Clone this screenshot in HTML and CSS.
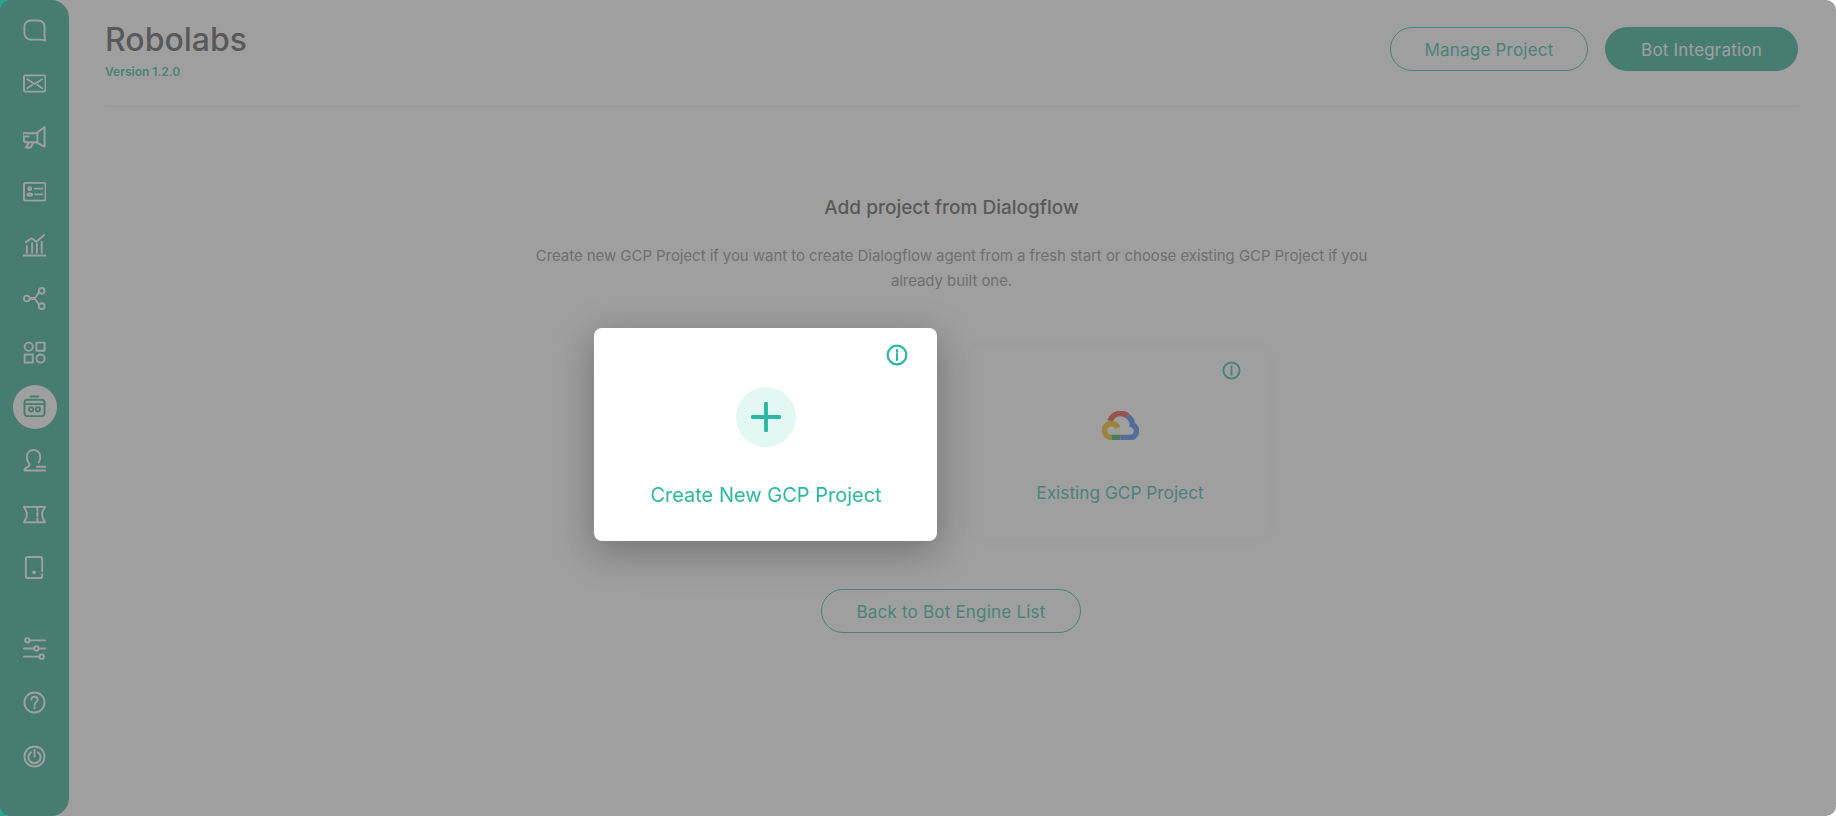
FILE: index.html
```html
<!DOCTYPE html>
<html lang="en">
<head>
<meta charset="utf-8">
<title>Robolabs</title>
<link rel="stylesheet" href="styles.css">
</head>
<body>

<div class="app">

  <aside class="sidebar">
    <nav class="nav-top">
      <a class="nav-item"><svg class="ico" viewBox="0 0 24 24"><path d="M8 1.500h8a6.500 6.500 0 0 1 6.500 6.500v8.500c0 2 .2 4 .9 6-2-.8-4.400-1-6.400-1H8A6.500 6.500 0 0 1 1.500 15V8A6.500 6.500 0 0 1 8 1.500z"/></svg></a>
      <a class="nav-item"><svg class="ico" viewBox="0 0 24 24"><rect x="1" y="3.500" width="22.500" height="17" rx="2"/><path d="M4.500 7.500l7.700 5 7.700-5M4.500 17l5-3.500M20 17l-5-3.500"/></svg></a>
      <a class="nav-item"><svg class="ico" viewBox="0 0 24 24"><path d="M22.500 1v20.500L14 17H3.500A2.500 2.500 0 0 1 1 14.500v-2A2.500 2.500 0 0 1 3.500 7.500H14zM15 7v10M6 11h-5M6.500 17L3 22.500h5L11 17"/></svg></a>
      <a class="nav-item"><svg class="ico" viewBox="0 0 24 24"><rect x="1" y="3" width="22.500" height="18.500" rx="2"/><path d="M12.500 9h7.500M12.500 15h7.500"/><circle cx="7" cy="9" r="1.500"/><path d="M4.500 15.500c0-1 1-1.500 2.500-1.500s2.500.5 2.500 1.500c0 .5-1 1-2.500 1s-2.500-.5-2.500-1z"/></svg></a>
      <a class="nav-item"><svg class="ico" viewBox="0 0 24 24"><path d="M.5 22.500h23M4 19.500v-7M9.500 19.500V9.500M14.500 19.500v-9M19.500 19.500V8M3 8.500l6-4 5 3.500 8-7"/></svg></a>
      <a class="nav-item"><svg class="ico" viewBox="0 0 24 24"><circle cx="4" cy="12" r="3"/><circle cx="19.500" cy="4" r="3"/><circle cx="19.500" cy="20" r="3"/><path d="M7 11.500L12.500 11.500 16.800 5.500M7 12.500l5.500 0 4.300 6"/></svg></a>
      <a class="nav-item"><svg class="ico" viewBox="0 0 24 24"><circle cx="6" cy="6" r="4.300"/><rect x="14" y="1.700" width="8.500" height="8.500"/><rect x="1.700" y="14" width="8.500" height="8.500"/><circle cx="18.300" cy="18.300" r="4.300"/></svg></a>
      <a class="nav-item active"><svg class="ico" viewBox="0 0 24 24"><path d="M8 1.500h8"/><rect x="1.500" y="5" width="21" height="17" rx="3"/><path d="M1.500 9.500h21"/><circle cx="8.500" cy="15" r="2.200"/><circle cx="15.500" cy="15" r="2.200"/></svg></a>
      <a class="nav-item"><svg class="ico" viewBox="0 0 24 24"><path d="M15 22.500H1.500c0-2 1.500-3 3-3.500 2-.7 2.500-2 2-3.500C5 13 4 11 4 8.500 4 4 7 1 11 1s7 3 7 7.500c0 2-.7 4-1.700 5.500"/><path d="M14.500 18.500h9M14.500 22.500h9"/></svg></a>
      <a class="nav-item"><svg class="ico" viewBox="0 0 24 24"><path d="M1 4h22l-2 3.500c-1 1.500-1 3-1 4.500s0 3 1 4.500L23 20H1l2-3.500c1-1.500 1-3 1-4.500s0-3-1-4.500zM15 4v4M15 10.500v3M15 16v4"/></svg></a>
      <a class="nav-item"><svg class="ico" viewBox="0 0 24 24"><path d="M20 19v2a2 2 0 0 1-2 2H5a2 2 0 0 1-2-2V3a2 2 0 0 1 2-2h13a2 2 0 0 1 2 2v13"/><circle cx="11.500" cy="17" r="1" class="dot"/></svg></a>
    </nav>
    <nav class="nav-bottom">
      <a class="nav-item"><svg class="ico" viewBox="0 0 24 24"><circle cx="4.500" cy="3.500" r="2.300"/><path d="M7 3.500h16M1 12h10M17 12h6M1 20.500h16"/><circle cx="14" cy="12" r="2.300"/><circle cx="19.500" cy="20.500" r="2.300"/></svg></a>
      <a class="nav-item"><svg class="ico" viewBox="0 0 24 24"><circle cx="12" cy="12" r="10.500"/><path d="M8.700 9.200c0-2 1.500-3.200 3.300-3.200s3.300 1.200 3.300 3c0 2.700-3.300 2.700-3.300 5.500"/><path d="M12 17v1"/></svg></a>
      <a class="nav-item"><svg class="ico" viewBox="0 0 24 24"><circle cx="12" cy="12" r="10.500"/><path d="M8.500 7.500a6.300 6.300 0 1 0 7 0M12 5v7"/></svg></a>
    </nav>
  </aside>

  <main class="content">
    <header class="top">
      <div>
        <h1 class="title">Robolabs</h1>
        <div class="version">Version 1.2.0</div>
      </div>
      <div class="top-btns">
        <a class="btn btn-line btn-manage">Manage Project</a>
        <a class="btn btn-fill">Bot Integration</a>
      </div>
    </header>

    <section class="add">
      <h2 class="add-title">Add project from Dialogflow</h2>
      <p class="add-text">Create new GCP Project if you want to create Dialogflow agent from a fresh start or choose existing GCP Project if you already built one.</p>

      <div class="cards">
        <div class="card card-existing">
          <svg class="info" viewBox="0 0 20 20"><circle cx="10" cy="10" r="8.500"/><path d="M10 9v5.500M10 5.500v1.500"/></svg>
          <svg class="gcp" viewBox="0 0 37 29">
            <path class="g-red" d="M8 10A11 11 0 0 1 25.500 5"/>
            <path class="g-yellow" d="M9.500 26.500A7 7 0 1 1 16 17"/>
            <path class="g-green" d="M9.500 26.500H18.500"/>
            <path class="g-blue" d="M18.500 26.500H28a6.500 6.500 0 0 0 2.300-12.600A11 11 0 0 0 25.500 5"/>
          </svg>
          <div class="card-label">Existing GCP Project</div>
        </div>
      </div>

      <a class="btn btn-line btn-back">Back to Bot Engine List</a>
    </section>
  </main>

</div>

<div class="overlay">
  <div class="card card-new">
    <svg class="info" viewBox="0 0 20 20"><circle cx="10" cy="10" r="8.500"/><path d="M10 9v5.500M10 5.500v1.500"/></svg>
    <div class="plus">
      <svg viewBox="0 0 28 28"><path d="M14 1.500v25M1.500 14h25"/></svg>
    </div>
    <div class="card-label">Create New GCP Project</div>
  </div>
</div>

</body>
</html>
```

FILE: styles.css
```css
* { box-sizing: border-box; }
html, body { margin: 0; height: 100%; overflow: hidden; }
body { font-family: Inter, "Liberation Sans", sans-serif; background: #fff; color: #505050; }

.app { display: flex; height: 816px; background: #fff; }

/* sidebar */
.sidebar { width: 69px; flex: none; display: flex; flex-direction: column; justify-content: space-between; padding: 8px 0 0; background: #25a98f; border-radius: 0 18px 18px 0; }
.nav-top, .nav-bottom { display: flex; flex-direction: column; align-items: center; }
.nav-bottom { padding-bottom: 38px; gap: 10px; }
.nav-item { width: 44px; height: 44px; margin-bottom: 9.800px; display: flex; align-items: center; justify-content: center; border-radius: 50%; color: #fff; }
.nav-bottom .nav-item { margin-bottom: 0; }
.nav-item.active { background: #fff; color: #25a98f; }
.ico { width: 23px; height: 23px; fill: none; stroke: currentColor; stroke-width: 2; stroke-linecap: round; stroke-linejoin: round; }
.ico .dot { fill: currentColor; }

/* main */
.content { flex: 1; padding: 0 38px 0 36px; }
.top { display: flex; justify-content: space-between; height: 107px; border-bottom: 1px solid #f0f0f0; padding-top: 22px; }
.title { margin: 0; font-size: 32px; font-weight: 500; line-height: 36px; color: #505050; }
.version { margin-top: 6px; font-size: 12px; font-weight: 600; line-height: 15px; color: #2bb8a0; }
.top-btns { display: flex; gap: 17px; padding-top: 5px; }

.btn { height: 44px; padding-top: 1px; display: inline-flex; align-items: center; justify-content: center; border-radius: 22px; font-size: 17px; letter-spacing: .2px; color: #2bb8a0; }
.btn-line { border: 1px solid #2bb8a0; background: #fff; }
.btn-fill { width: 193px; background: #25a98f; color: #fff; }
.btn-manage { width: 198px; }
.btn-back { width: 260px; margin-right: 1px; }

.add { display: flex; flex-direction: column; align-items: center; padding-top: 90px; }
.add-title { margin: 0; font-size: 19px; font-weight: 500; line-height: 22px; color: #505050; }
.add-text { width: 850px; margin: 24px 0 0; font-size: 15px; letter-spacing: -.06px; line-height: 25px; text-align: center; color: #888; }

.cards { width: 100%; height: 193px; margin-top: 54px; margin-bottom: 49px; display: flex; justify-content: center; }
.card { position: relative; display: flex; flex-direction: column; align-items: center; background: #fff; }
.card-label { font-size: 17.300px; color: #2bb8a0; }
.info { position: absolute; fill: none; stroke: #2bb8a0; stroke-width: 2; stroke-linecap: round; }

.card-existing { width: 298px; height: 190px; margin-left: 337px; padding-top: 64px; border-radius: 8px; box-shadow: 0 0 20px rgba(0, 0, 0, .05); }
.card-existing .info { top: 14px; right: 28px; width: 19px; height: 19px; }
.card-existing .card-label { margin-top: 42px; }
.gcp { width: 37px; height: 29px; flex: none; fill: none; stroke-width: 5.600; }
.g-red { stroke: #ea4335; }
.g-blue { stroke: #4285f4; }
.g-green { stroke: #34a853; }
.g-yellow { stroke: #fbbc05; }

/* overlay with the highlighted card */
.overlay { position: fixed; inset: 0; background: rgba(95, 95, 95, .6); border-radius: 10px; }
.card-new { position: absolute; left: 594px; top: 328px; width: 343px; height: 213px; padding: 59px 0 0 1px; border-radius: 8px; box-shadow: 0 10px 40px rgba(0, 0, 0, .3); }
.card-new .info { top: 16px; right: 29px; width: 22px; height: 22px; }
.card-new .card-label { margin-top: 36px; font-size: 20px; }
.plus { width: 60px; height: 60px; display: flex; align-items: center; justify-content: center; border-radius: 50%; background: #e3f7f3; }
.plus svg { width: 30px; height: 30px; fill: none; stroke: #2bb8a0; stroke-width: 3.600; stroke-linecap: round; }
```
